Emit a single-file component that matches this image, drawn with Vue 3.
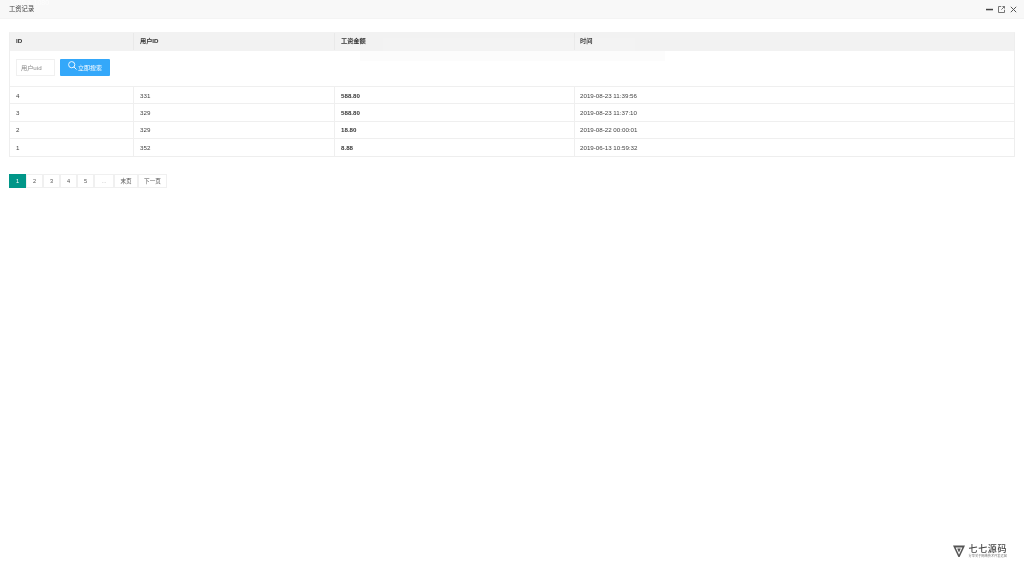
<script setup>
const columns = ['ID', '用户ID', '工资金额', '时间']
const rows = [
  { id: 4, uid: 331, amount: '588.80', time: '2019-08-23 11:39:56' },
  { id: 3, uid: 329, amount: '588.80', time: '2019-08-23 11:37:10' },
  { id: 2, uid: 329, amount: '18.80', time: '2019-08-22 00:00:01' },
  { id: 1, uid: 352, amount: '8.88', time: '2019-06-13 10:59:32' }
]
const pages = ['2', '3', '4', '5']
</script>

<template>
  <div class="page">
    <header class="titlebar">
      <span class="ghost">1920 × 1080</span>
      <span class="title">工资记录</span>
      <div class="win-icons">
        <svg width="7" height="7" viewBox="0 0 7 7"><rect x="0" y="2.8" width="7" height="1.5" fill="#444" /></svg>
        <svg width="7" height="7" viewBox="0 0 7 7" fill="none" stroke="#666" stroke-width="0.9"><path d="M3.2.5H.5v6h6V3.8" /><path d="M3.4 3.6 6.5.5M4.4.5h2.1v2.1" /></svg>
        <svg width="7" height="7" viewBox="0 0 7 7" fill="none" stroke="#555" stroke-width="1"><path d="M.8.8l5.4 5.4M6.2.8.8 6.2" /></svg>
      </div>
    </header>

    <main class="content">
      <section class="table">
        <div class="hint"></div>
        <div class="hint-top"></div>
        <div class="row head">
          <div v-for="c in columns" :key="c" class="cell">{{ c }}</div>
        </div>
        <div class="toolbar">
          <div class="input">用户uid</div>
          <button class="search" type="button">
            <svg class="search-icon" width="9" height="9" viewBox="0 0 9 9" fill="none" stroke="#fff" stroke-width="0.9"><circle cx="3.7" cy="3.7" r="3.1" /><path d="M5.9 5.9 8.5 8.5" /></svg>
            <span>立即搜索</span>
          </button>
        </div>
        <div v-for="r in rows" :key="r.id" class="row body">
          <div class="cell">{{ r.id }}</div>
          <div class="cell">{{ r.uid }}</div>
          <div class="cell strong">{{ r.amount }}</div>
          <div class="cell">{{ r.time }}</div>
        </div>
      </section>

      <nav class="pager">
        <span class="pg current">1</span>
        <span v-for="p in pages" :key="p" class="pg">{{ p }}</span>
        <span class="pg dots">...</span>
        <span class="pg wide">末页</span>
        <span class="pg wider">下一页</span>
      </nav>
    </main>

    <div class="brand">
      <svg width="12" height="12" viewBox="0 0 12 12"><path d="M0 .5h12L6.6 12H5.4Z" fill="#555" /><path d="M2.6 2.6h6.8L6 9.8Z" fill="#fff" /><path d="M4.2 3.6h3.6L6 7.6Z" fill="#555" /></svg>
      <div class="brand-text">
        <div class="brand-name">七七源码</div>
        <div class="brand-sub">分享关于网络技术开发运营</div>
      </div>
    </div>
  </div>
</template>

<style>
html, body { margin: 0; background: #fff; }
</style>

<style scoped>
.page {
  position: relative;
  width: 1024px;
  height: 576px;
  overflow: hidden;
  background: #fff;
  font-family: "Liberation Sans", "Noto Sans CJK SC", sans-serif;
  font-size: 6.2px;
  color: #444;
  filter: blur(0.3px);
}
.titlebar {
  position: relative;
  height: 19px;
  box-sizing: border-box;
  padding: 0 7px 0 9px;
  display: flex;
  align-items: center;
  justify-content: space-between;
  background: #f8f8f8;
  border-bottom: 1px solid #f4f4f4;
  color: #444;
}
.ghost {
  position: absolute;
  left: 10px;
  top: 0;
  font-size: 7px;
  line-height: 5px;
  color: #fcfcfc;
}
.title {
  font-size: 6.3px;
  margin-bottom: 1px;
}
.win-icons {
  display: flex;
  align-items: center;
  gap: 5px;
}
.content {
  padding: 13px 9px 0;
}
.table {
  position: relative;
  width: 1006px;
  box-sizing: border-box;
  border: 1px solid #eeeeee;
  border-top-color: #f2f2f2;
}
.row {
  display: grid;
  grid-template-columns: 123px 201px 240px 1fr;
}
.cell {
  padding-left: 6px;
  border-left: 1px solid #efefef;
  display: flex;
  align-items: center;
}
.cell:first-child { border-left: 0; }
.cell:last-child { padding-left: 5px; }
.head {
  height: 17px;
  background: #f2f2f2;
  font-weight: 700;
  color: #333;
}
.head .cell {
  border-left-color: #e9e9e9;
  padding-bottom: 2px;
}
.toolbar {
  height: 37px;
  box-sizing: border-box;
  padding: 0 0 2px 6px;
  display: flex;
  align-items: center;
  gap: 5px;
  border-top: 1px solid #f2f2f2;
  border-bottom: 1px solid #efefef;
}
.input {
  width: 39px;
  height: 17px;
  box-sizing: border-box;
  padding-left: 4px;
  display: flex;
  align-items: center;
  border: 1px solid #f0f0f0;
  color: #888;
}
.search {
  width: 50px;
  height: 17px;
  padding: 0 0 0 8px;
  display: flex;
  align-items: center;
  gap: 1px;
  border: 0;
  border-radius: 1px;
  background: #34a8fa;
  color: #fff;
  font: inherit;
  font-size: 6px;
}
.search-icon { margin-top: -4px; }
.body {
  height: 17.25px;
  border-bottom: 1px solid #efefef;
  box-sizing: border-box;
  color: #444;
}
.body:last-of-type { border-bottom: 0; }
.strong {
  font-weight: 700;
  color: #333;
}
.hint {
  position: absolute;
  left: 350px;
  top: 18px;
  width: 305px;
  height: 10px;
  background: rgba(0, 0, 0, 0.012);
}
.hint-top {
  position: absolute;
  left: 373px;
  top: 5px;
  width: 252px;
  height: 13px;
  background: rgba(255, 255, 255, 0.08);
  z-index: 1;
}
.pager {
  display: flex;
  margin-top: 17px;
  color: #555;
}
.pg {
  width: 17px;
  height: 14px;
  box-sizing: border-box;
  display: flex;
  align-items: center;
  justify-content: center;
  border: 1px solid #f0f0f0;
  font-size: 5.6px;
}
.current {
  border-color: #009688;
  background: #009688;
  color: #fff;
}
.dots { width: 20px; color: #aaa; }
.wide { width: 24px; }
.wider { width: 29px; }
.brand {
  position: absolute;
  right: 17px;
  bottom: 18px;
  display: flex;
  align-items: center;
  gap: 4px;
  color: #444;
}
.brand-name {
  font-size: 9px;
  line-height: 10px;
  font-weight: 500;
  letter-spacing: 0.6px;
  font-family: "Noto Sans CJK SC", sans-serif;
}
.brand-sub {
  font-size: 3.2px;
  line-height: 4px;
  white-space: nowrap;
  color: #777;
}
</style>
